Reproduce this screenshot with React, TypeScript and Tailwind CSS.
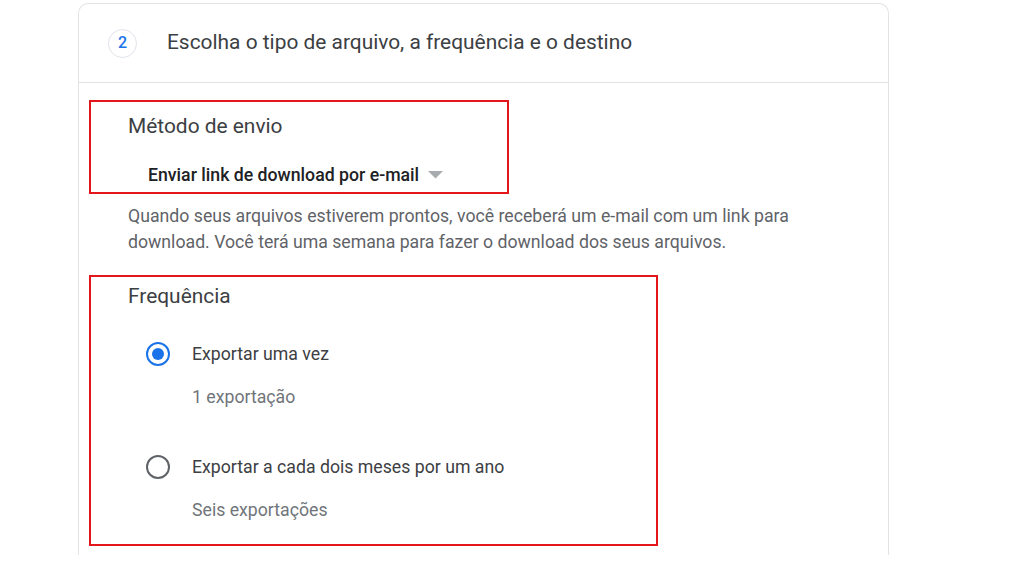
import React from 'react';

const RadioOption: React.FC<{ checked?: boolean; label: string; hint: string }> = ({ checked, label, hint }) => (
  <div className="flex items-start">
    <div className="w-[24px] h-[24px] flex items-center justify-center">
      {checked ? (
        <span className="w-[24px] h-[24px] rounded-full border-2 border-[#1a73e8] flex items-center justify-center">
          <span className="w-[12px] h-[12px] rounded-full bg-[#1a73e8]" />
        </span>
      ) : (
        <span className="w-[24px] h-[24px] rounded-full border-2 border-[#5f6368]" />
      )}
    </div>
    <div className="ml-[22px]">
      <div className="h-[24px] leading-[24px] text-[17.7px] text-[#3c4043]">{label}</div>
      <div className="mt-[19px] h-[24px] leading-[24px] text-[17.7px] text-[#70757a]">{hint}</div>
    </div>
  </div>
);

export default function App() {
  return (
    <div className="w-[1024px] h-[576px] bg-white overflow-hidden font-['Roboto',sans-serif]">
      <div className="ml-[78px] mt-[3px] w-[811px] h-[552px] border border-b-0 border-[#e3e3e3] rounded-t-[10px]">
        {/* step header */}
        <div className="h-[79px] border-b border-[#e3e3e3] flex items-center pl-[29px]">
          <div className="w-[29px] h-[29px] rounded-full border border-[#dfe3ea] flex items-center justify-center text-[16px] font-medium text-[#1a73e8]">
            2
          </div>
          <div className="ml-[30px] text-[20.9px] text-[#3c4043]">Escolha o tipo de arquivo, a frequência e o destino</div>
        </div>

        <div className="pt-[17px] pl-[10px]">
          {/* delivery method */}
          <div className="w-[420px] h-[94px] border-2 border-[#e3161b] pl-[37px] pt-[12px]">
            <div className="h-[24px] leading-[24px] text-[20.9px] text-[#3c4043]">Método de envio</div>
            <div className="mt-[25px] ml-[20px] flex items-center h-[24px]">
              <span className="text-[17.7px] font-medium text-[#202124]">Enviar link de download por e-mail</span>
              <svg className="ml-[9px]" width="15" height="8" viewBox="0 0 15 8">
                <path d="M0 0 L15 0 L7.5 7.5 Z" fill="#a8acb0" />
              </svg>
            </div>
          </div>

          <p className="mt-[9px] ml-[39px] w-[690px] text-[17.7px] leading-[26px] text-[#5f6368]">
            Quando seus arquivos estiverem prontos, você receberá um e-mail com um link para download. Você terá uma semana para fazer o download dos seus arquivos.
          </p>

          {/* frequency */}
          <div className="mt-[20px] w-[569px] h-[271px] border-2 border-[#e3161b] pl-[37px] pt-[7px]">
            <div className="h-[24px] leading-[24px] text-[20.9px] text-[#3c4043]">Frequência</div>
            <div className="mt-[34px] ml-[18px] flex flex-col gap-[46px]">
              <RadioOption checked label="Exportar uma vez" hint="1 exportação" />
              <RadioOption label="Exportar a cada dois meses por um ano" hint="Seis exportações" />
            </div>
          </div>
        </div>
      </div>
    </div>
  );
}
